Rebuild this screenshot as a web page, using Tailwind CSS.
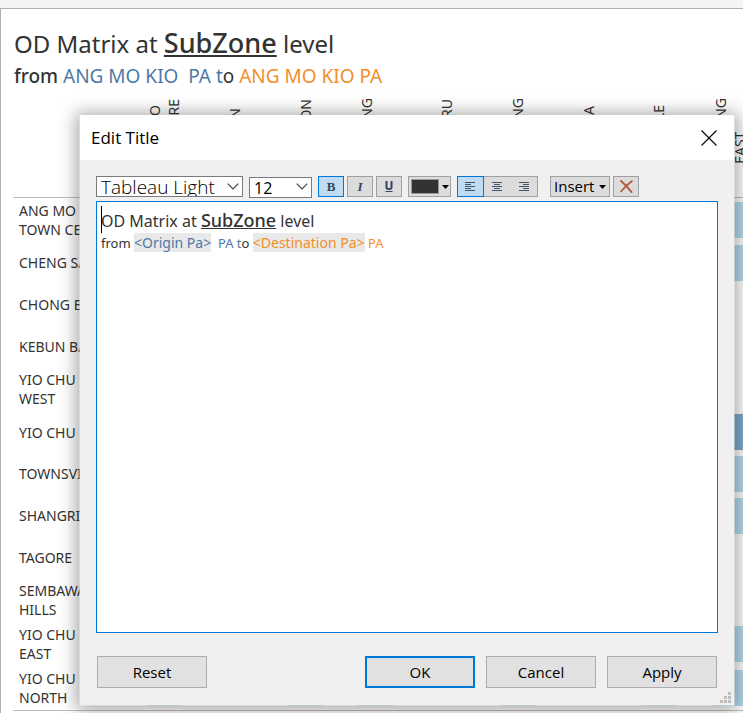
<!DOCTYPE html>
<html lang="en">
<head>
<meta charset="utf-8">
<meta name="viewport" content="width=device-width, initial-scale=1">
<title>OD Matrix</title>
<script src="https://cdn.jsdelivr.net/npm/@tailwindcss/browser@4"></script>
</head>
<body class="bg-[#f4f4f4] font-['Noto_Sans',sans-serif] text-[#333]">
<div class="relative flex min-h-screen flex-col overflow-hidden pt-2">
  <main class="flex flex-1 flex-col overflow-hidden border-t border-l border-[#b0b0b0] bg-white pb-0.5">
    <header class="px-[13px] pt-4 whitespace-nowrap">
      <h1 class="text-[24px] leading-9">OD Matrix at <span class="text-[27px] font-medium underline decoration-2 underline-offset-2">SubZone</span> level</h1>
      <p class="text-[19px] leading-7"><span class="font-medium">from</span> <span class="text-[#4e79a7]">ANG MO KIO&nbsp; PA t</span>o <span class="text-[#f28e2b]">ANG MO KIO PA</span></p>
    </header>
    <section aria-label="Matrix" class="ml-3 flex flex-1 flex-col text-[14px] leading-[19px]">
      <div id="heads" class="mt-2 ml-[116px] grid h-[99px] w-[636px] grid-cols-9"></div>
      <div id="rows" class="flex flex-1 flex-col border-y border-[#bdbdbd]"></div>
    </section>
  </main>

  <div role="dialog" aria-labelledby="dlg" class="absolute top-[115px] right-2 bottom-[7px] left-[79px] flex flex-col border-x border-b border-[#f0f0f0]/50 bg-[#f0f0f0] bg-clip-padding font-['Open_Sans',sans-serif] text-black shadow-[0_1px_16px_3px_rgba(0,0,0,0.35)]">
    <div class="flex h-[45px] items-center justify-between bg-white pr-[17px] pl-[11px]">
      <h2 id="dlg" class="text-[17px]">Edit Title</h2>
      <button aria-label="Close"><svg class="size-4" viewBox="0 0 16 16" fill="none" stroke="#000" stroke-width="1.1"><path d="M.5.5l15 15M15.5.5l-15 15"/></svg></button>
    </div>
    <div class="flex flex-1 flex-col px-4 pt-4">
      <div class="flex h-[21px] shrink-0">
        <div class="relative mr-1.5 w-[147px] overflow-hidden">
          <select aria-label="Font" class="size-full appearance-none border border-[#7a7a7a] bg-white pl-1 text-[19px] leading-5 font-light"><option>Tableau Light</option></select>
          <svg class="pointer-events-none absolute top-[7px] right-1 h-[7px] w-3" viewBox="0 0 12 7" fill="none" stroke="#444" stroke-width="1.2"><path d="M.7.7L6 6l5.300-5.300"/></svg>
        </div>
        <div class="relative mr-1.5 w-[63px]">
          <select aria-label="Size" class="size-full appearance-none border border-[#7a7a7a] bg-white pl-1 text-[16px] leading-5"><option>12</option></select>
          <svg class="pointer-events-none absolute top-[7px] right-1 h-[7px] w-3" viewBox="0 0 12 7" fill="none" stroke="#444" stroke-width="1.2"><path d="M.7.7L6 6l5.300-5.300"/></svg>
        </div>
        <button aria-label="Bold" class="mr-[3px] grid w-[26px] place-items-center border border-[#0078d7] bg-[#c0dcf3] font-['Liberation_Serif',serif] text-[13px] leading-none font-bold text-[#36445a]">B</button>
        <button aria-label="Italic" class="mr-[3px] grid w-[26px] place-items-center border border-[#a0a0a0] bg-[#dcdcdc] font-['Liberation_Serif',serif] text-[13px] leading-none font-bold text-[#36445a] italic">I</button>
        <button aria-label="Underline" class="mr-1.5 grid w-[26px] place-items-center border border-[#a0a0a0] bg-[#dcdcdc] text-[#36445a]"><svg class="h-3 w-2" viewBox="0 0 8 12" fill="none" stroke="currentColor"><path stroke-width="2" d="M1.500 0v6.500q0 1.500 2.500 1.500t2.500-1.500V0"/><path d="M.5 10.500h7"/></svg></button>
        <button aria-label="Text color" class="mr-1.5 flex w-[43px] items-center justify-between border border-[#a0a0a0] bg-[#dcdcdc] pr-px pl-0.5"><span class="h-[15px] w-7 border border-[#999] bg-[#333]"></span><svg class="h-1 w-[7px]" viewBox="0 0 7 4"><path d="M0 0h7L3.500 4z"/></svg></button>
        <div class="mr-3 flex w-[81px] border border-[#a0a0a0] bg-[#dcdcdc] text-[#44546c]">
          <button aria-label="Align left" class="-my-px -ml-px grid w-[27px] place-items-center border border-[#0078d7] bg-[#c0dcf3]"><svg class="h-[9px] w-2.5" viewBox="0 0 10 9" stroke="currentColor"><path d="M0 .5h10M0 2.500h6M0 4.500h10M0 6.500h6M0 8.500h10"/></svg></button>
          <button aria-label="Align center" class="grid w-[27px] place-items-center"><svg class="h-[9px] w-2.5" viewBox="0 0 10 9" stroke="currentColor"><path d="M0 .5h10M2 2.500h6M0 4.500h10M2 6.500h6M0 8.500h10"/></svg></button>
          <button aria-label="Align right" class="grid w-[27px] place-items-center"><svg class="h-[9px] w-2.5" viewBox="0 0 10 9" stroke="currentColor"><path d="M0 .5h10M4 2.500h6M0 4.500h10M4 6.500h6M0 8.500h10"/></svg></button>
        </div>
        <button class="mr-[3px] flex w-[60px] items-center justify-between border border-[#a0a0a0] bg-[#dcdcdc] px-[3px] text-[15px] leading-none">Insert<svg class="h-1 w-[7px]" viewBox="0 0 7 4"><path d="M0 0h7L3.500 4z"/></svg></button>
        <button aria-label="Clear" class="grid w-[26px] place-items-center border border-[#a0a0a0] bg-[#dcdcdc]"><svg class="h-[13px] w-[13px]" viewBox="0 0 13 13" fill="none" stroke="#b3563c" stroke-width="2" stroke-linecap="round"><path d="M1 1q5 4 10.500 11"/><path stroke-width="1.600" d="M12 1Q6 5.500 1 11.500"/></svg></button>
      </div>
      <div role="textbox" aria-label="Title text" aria-multiline="true" contenteditable="true" class="relative mt-1 flex-1 border border-[#0078d7] bg-white px-1 pt-1.5 font-['Noto_Sans',sans-serif] whitespace-nowrap text-[#333]">
        <span aria-hidden="true" class="absolute top-1 left-1 h-[27px] w-px bg-black"></span>
        <p class="text-[16px] leading-[25px]">OD Matrix at <span class="text-[18px] font-medium underline">SubZone</span> level</p>
        <p class="text-[13px] leading-[18px]">from <span class="bg-[#e9e9e9] text-[14px] text-[#4e79a7]">&lt;Origin Pa&gt;</span><span class="text-[#4e79a7]">&nbsp; PA t</span>o <span class="bg-[#e9e9e9] text-[14px] text-[#f28e2b]">&lt;Destination Pa&gt;</span><span class="text-[#f28e2b]"> PA</span></p>
      </div>
      <div class="flex gap-[11px] px-px pt-[23px] pb-[17px] text-[15px] leading-none">
        <button class="mr-auto h-8 w-[110px] border border-[#adadad] bg-[#e1e1e1]">Reset</button>
        <button class="h-8 w-[110px] border-2 border-[#0078d7] bg-[#e1e1e1]">OK</button>
        <button class="h-8 w-[110px] border border-[#adadad] bg-[#e1e1e1]">Cancel</button>
        <button class="h-8 w-[110px] border border-[#adadad] bg-[#e1e1e1]">Apply</button>
      </div>
    </div>
    <svg aria-hidden="true" class="absolute right-[3px] bottom-0.5 size-[11px]" viewBox="0 0 11 11" fill="#bdbdbd"><path d="M8 0h3v3H8zM4 4h3v3H4zM8 4h3v3H8zM0 8h3v3H0zM4 8h3v3H4zM8 8h3v3H8z"/></svg>
  </div>
</div>
<script>
const cols = ['ANG MO KIO<br>TOWN CENTRE','CHENG SAN','CHONG BOON','YIO CHU KANG<br>WEST','KEBUN BAHRU','YIO CHU KANG','SHANGRI-LA','TOWNSVILLE','YIO CHU KANG<br>EAST'];
document.getElementById('heads').innerHTML = cols.map(c =>
  `<div class="flex items-center justify-center"><span class="rotate-180 text-center whitespace-nowrap [writing-mode:vertical-rl]">${c}</span></div>`).join('');
// Each row: label, then one digit per column (0 empty, 1 light, 2 dark).
const rows = [['ANG MO KIO<br>TOWN CENTRE','000000001'],['CHENG SAN','000000001'],['CHONG BOON','000000000'],['KEBUN BAHRU','000000000'],['YIO CHU KANG<br>WEST','000000000'],['YIO CHU KANG','000000002'],['TOWNSVILLE','000000001'],['SHANGRI-LA','000000001'],['TAGORE','000000000'],['SEMBAWANG<br>HILLS','000000000'],['YIO CHU KANG<br>EAST','000000001'],['YIO CHU KANG<br>NORTH','101101011']];
const tone = ['', 'bg-[#b5dbef]', 'bg-[#80acce]'];
document.getElementById('rows').innerHTML = rows.map(([l, v]) =>
  `<div class="flex flex-1 items-center"><div class="w-[116px] shrink-0 pl-1.5 whitespace-nowrap">${l}</div><div class="grid w-[636px] shrink-0 grid-cols-9 justify-items-center">${[...v].map(d =>
  `<i class="size-9 ${tone[d]}"></i>`).join('')}</div></div>`).join('');
</script>
</body>
</html>
